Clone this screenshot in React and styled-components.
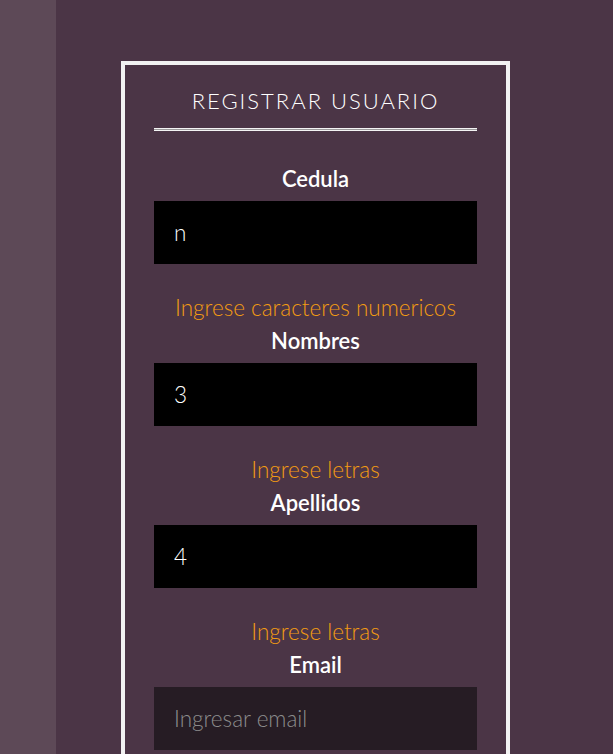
import React from "react";
import styled, { createGlobalStyle } from "styled-components";

const GlobalStyle = createGlobalStyle`
    html, body {
        margin: 0;
        padding: 0;
        background: #4b3546;
        font-family: Lato, "Open Sans", sans-serif;
    }
`;

const Page = styled.div`
    display: flex;
    min-height: 754px;
`;

const SideStrip = styled.div`
    flex: 0 0 56px;
    background: #5d4957;
`;

const Main = styled.main`
    flex: 1 1 auto;
    padding: 61px 0 0 65px;
    background: #4b3546;
`;

const Card = styled.form`
    width: 389px;
    box-sizing: border-box;
    border: 4px solid #f2f2f2;
    border-bottom: none;
    padding: 21px 29px 40px;
    display: flex;
    flex-direction: column;
`;

const Title = styled.h2`
    margin: 0;
    font-weight: 300;
    font-size: 22px;
    line-height: 30px;
    letter-spacing: 2px;
    color: #ffffff;
    text-align: center;
`;

const Rule = styled.div`
    height: 1px;
    margin: 12px 0 36px;
    background: #9a9a9a;
    border-top: 1px solid #f4f4f4;
    border-bottom: 1px solid #f4f4f4;
`;

const Field = styled.div`
    display: flex;
    flex-direction: column;
`;

const Label = styled.label`
    font-weight: 600;
    font-size: 22px;
    line-height: 24px;
    color: #ffffff;
    text-align: center;
    margin-bottom: 10px;
`;

const Input = styled.input`
    height: 63px;
    border: none;
    outline: none;
    padding: 0 20px;
    box-sizing: border-box;
    background: ${p => (p.$empty ? "#261c24" : "#000000")};
    color: #ffffff;
    font-family: Lato, sans-serif;
    font-weight: 300;
    font-size: 22.5px;

    &::placeholder {
        color: #8c8c8c;
    }
`;

const Hint = styled.div`
    margin: 32px 0 9px;
    font-weight: 300;
    font-size: 22.5px;
    line-height: 24px;
    color: #f39c12;
    text-align: center;
`;

const fields = [
    { label: "Cedula", value: "n", hint: "Ingrese caracteres numericos" },
    { label: "Nombres", value: "3", hint: "Ingrese letras" },
    { label: "Apellidos", value: "4", hint: "Ingrese letras" },
    { label: "Email", value: "", placeholder: "Ingresar email" },
];

export default function App() {
    return (
        <>
            <GlobalStyle />
            <Page>
                <SideStrip />
                <Main>
                    <Card onSubmit={e => e.preventDefault()}>
                        <Title>REGISTRAR USUARIO</Title>
                        <Rule />
                        {fields.map(f => (
                            <Field key={f.label}>
                                <Label>{f.label}</Label>
                                <Input
                                    defaultValue={f.value}
                                    placeholder={f.placeholder}
                                    $empty={!f.value}
                                />
                                {f.hint && <Hint>{f.hint}</Hint>}
                            </Field>
                        ))}
                    </Card>
                </Main>
            </Page>
        </>
    );
}
